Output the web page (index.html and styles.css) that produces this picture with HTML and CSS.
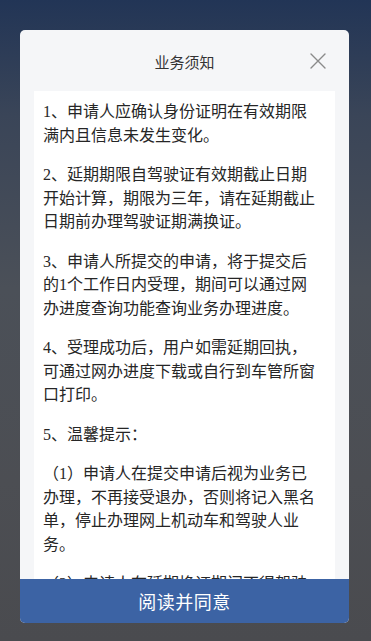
FILE: index.html
```html
<!DOCTYPE html>
<html lang="zh-CN">
<head>
<meta charset="utf-8">
<title>业务须知</title>
<link rel="stylesheet" href="styles.css">
</head>
<body>
<div class="screen">
  <div class="modal">
    <div class="modal-header">
      <div class="modal-title">业务须知</div>
      <button class="modal-close" aria-label="关闭">
        <svg width="16" height="16" viewBox="0 0 16 16"><path d="M1 1 L15 15 M15 1 L1 15" stroke="#8a8a8a" stroke-width="1.4" fill="none" stroke-linecap="round"/></svg>
      </button>
    </div>
    <div class="modal-body">
      <p>1、申请人应确认身份证明在有效期限满内且信息未发生变化。</p>
      <p>2、延期期限自驾驶证有效期截止日期开始计算，期限为三年，请在延期截止日期前办理驾驶证期满换证。</p>
      <p>3、申请人所提交的申请，将于提交后的1个工作日内受理，期间可以通过网办进度查询功能查询业务办理进度。</p>
      <p>4、受理成功后，用户如需延期回执，可通过网办进度下载或自行到车管所窗口打印。</p>
      <p>5、温馨提示：</p>
      <p>（1）申请人在提交申请后视为业务已办理，不再接受退办，否则将记入黑名单，停止办理网上机动车和驾驶人业务。</p>
      <p>（2）申请人在延期换证期间不得驾驶机动车上道路行驶。</p>
    </div>
    <button class="modal-btn">阅读并同意</button>
  </div>
</div>
</body>
</html>
```
FILE: styles.css
```css
html, body {
  margin: 0;
  padding: 0;
}
body {
  width: 371px;
  height: 641px;
  overflow: hidden;
  font-family: "Liberation Serif", "Noto Sans CJK SC", serif;
}
.screen {
  height: 641px;
  background: linear-gradient(180deg, #223556 0%, #3a4558 18%, #4b5058 45%, #4c4e53 75%, #4a4b4f 100%);
  padding: 30px 22px 18px 20px;
  box-sizing: border-box;
  display: flex;
  flex-direction: column;
}
.modal {
  flex: 1;
  display: flex;
  flex-direction: column;
  background: #f5f6f8;
  border-radius: 5px;
  overflow: hidden;
}
.modal-header {
  height: 61px;
  flex: none;
  display: flex;
  align-items: center;
  justify-content: center;
  position: relative;
}
.modal-title {
  font-family: "Noto Sans CJK SC", sans-serif;
  font-size: 15px;
  color: #333;
  margin-top: 1px;
}
.modal-close {
  position: absolute;
  right: 23px;
  top: 23px;
  width: 16px;
  height: 16px;
  padding: 0;
  border: none;
  background: none;
  display: flex;
}
.modal-body {
  flex: 1;
  min-height: 0;
  overflow: hidden;
  background: #fff;
  margin: 0 14px;
  padding: 9px 14px 0 9px;
  color: #262626;
  font-size: 16px;
  line-height: 23.5px;
}
.modal-body p {
  margin: 0 0 16px;
}
.modal-btn {
  flex: none;
  height: 44px;
  border: none;
  background: #3c63a4;
  color: #fff;
  font-family: "Noto Sans CJK SC", sans-serif;
  font-size: 18px;
  letter-spacing: 0.5px;
  padding: 0;
}
```
